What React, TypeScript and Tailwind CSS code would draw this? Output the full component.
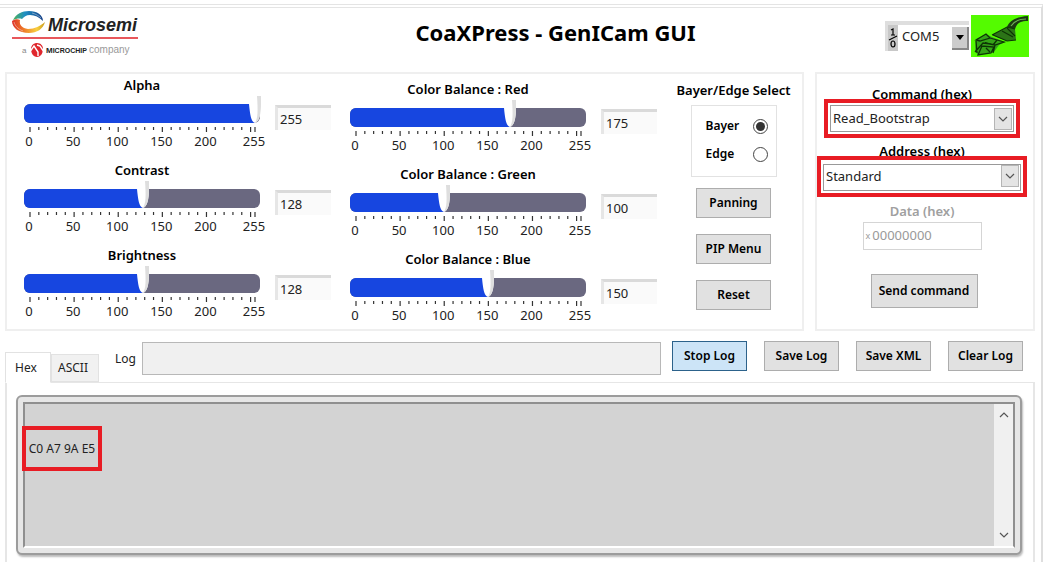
import { useState } from 'react';
import type { ReactNode } from 'react';

const TICKS = [...Array.from({ length: 26 }, (_, i) => i * 10), 255];
const TICK_LABELS = [0, 50, 100, 150, 200, 255];

const MicrosemiLogo = () => (
  <svg width="130" height="50" viewBox="0 0 130 50" role="img" aria-label="Microsemi, a Microchip company">
    <defs>
      <linearGradient id="swoosh-top">
        <stop offset="0" stopColor="#4fb35a" />
        <stop offset="0.4" stopColor="#1f8fc4" />
        <stop offset="1" stopColor="#163f86" />
      </linearGradient>
      <linearGradient id="swoosh-bottom">
        <stop offset="0" stopColor="#dd3127" />
        <stop offset="0.35" stopColor="#ee7a2a" />
        <stop offset="0.75" stopColor="#f8cf3f" />
        <stop offset="1" stopColor="#c99b1e" />
      </linearGradient>
    </defs>
    <path d="M1 9C4 3 10 0 17 0c8 0 14 4 14 10-4-4-8-6-13-6-4 0-6 2-8 4-3-1-6 0-9 1z" fill="url(#swoosh-top)" />
    <path d="M0 10c3-2 6-2 8-1-1 5 2 8 8 9 7 0 12-3 17-7-2 7-8 11-16 11C7 22 0 17 0 10z" fill="url(#swoosh-bottom)" />
    <path d="M2 11c1 4 4 7 9 9M20 2c4 1 7 3 9 5" fill="none" stroke="#fff" strokeOpacity="0.5" strokeWidth="0.8" />
    <text x="36" y="20" fontFamily="'Liberation Sans', Arial, sans-serif" fontSize="18" fontWeight="700" fontStyle="italic" fill="#222">
      Microsemi
    </text>
    <rect x="0" y="26" width="126" height="2" fill="#e8575b" />
    <text x="10" y="42" fontFamily="'Liberation Sans', Arial, sans-serif" fontSize="8" fill="#888">a</text>
    <path d="M19 38c0-4 3-6 6-6 4 0 6 3 6 6 0 5-3 8-6 8-4 0-6-4-6-8z" fill="#e0262d" />
    <path d="M17 42l5-7 4 6v4M25 34l3 1 4 6" fill="none" stroke="#fff" strokeWidth="1.4" />
    <text x="34" y="42" fontFamily="'Liberation Sans', Arial, sans-serif" fontSize="8" fontWeight="700" fill="#222">
      M<tspan fontSize="7">ICROCHIP</tspan>
    </text>
    <text x="77" y="42" fontFamily="'Liberation Sans', Arial, sans-serif" fontSize="10" fill="#999">company</text>
  </svg>
);

const ConnectorIcon = () => (
  <svg width="58" height="42" viewBox="0 0 58 42" role="img" aria-label="Connected" className="bg-[#54fb00]">
    <path d="M36 12C39 5 45 2 57 1v5c-8 0-11 2-13 8z" fill="#1b3a12" />
    <path d="M40 11c3-5 8-7 15-7" fill="none" stroke="#6fae58" strokeWidth="1.2" />
    <path d="M21 20l15-8 8 2 1 11-9 1z" fill="#2c7417" />
    <path d="M21 20l15-8 8 2M22 20l14 6 9-1M31 16l11 6M36 13l8 8" fill="none" stroke="#0d3305" strokeWidth="1.1" />
    <path d="M5 24l10-5 6 3 13 5-6 3-5 7-16 3-3-4z" fill="#35a318" />
    <path d="M5 25l10-6 4 4-10 3zM5 26l1 12M4 37l8-9 8 1M7 40l4-9 12 1-3 6zM19 23l14 4-9 3-10-2M24 30l-2 8M15 33l4 4M26 25l-4 5" fill="none" stroke="#0d3305" strokeWidth="1.3" />
  </svg>
);

const Chevron = () => (
  <svg width="10" height="6" viewBox="0 0 10 6" fill="none" stroke="#555" strokeWidth="1.2" aria-hidden="true">
    <path d="M1 1l4 4 4-4" />
  </svg>
);

const Scale = () => (
  <svg width="248" height="28" viewBox="-6 0 248 28" className="-mx-1.5" aria-hidden="true">
    {TICKS.map((t) => (
      <line
        key={t}
        x1={6 + (t / 255) * 225}
        x2={6 + (t / 255) * 225}
        y1="4"
        y2={t % 50 === 0 || t === 255 ? 9 : 7}
        stroke="#333"
        strokeWidth="1.2"
      />
    ))}
    {TICK_LABELS.map((t) => (
      <text key={t} x={5 + (t / 255) * 225} y="23" textAnchor="middle" fontSize="13" fill="#222">
        {t}
      </text>
    ))}
  </svg>
);

type SliderProps = { id: string; label: string; initial: number };

const Slider = ({ id, label, initial }: SliderProps) => {
  const [value, setValue] = useState(initial);
  const position = `${2.5 + (value / 255) * 95.4}%`;

  const update = (next: number) => {
    if (!Number.isNaN(next)) setValue(Math.min(255, Math.max(0, next)));
  };

  return (
    <div className="flex h-[85px] items-start gap-[15px]">
      <div className="w-[236px]">
        <label htmlFor={id} className="block text-center text-[13px] leading-5 font-semibold">
          {label}
        </label>
        <div className="relative mt-[9px] h-[19px] rounded-md bg-[#6a6880]">
          <div className="h-full rounded-l-md bg-[#1746e0]" style={{ width: position }} />
          {/* Thumb hangs over the top edge of the track */}
          <svg
            width="14"
            height="27"
            viewBox="0 0 14 27"
            className="absolute bottom-0 -translate-x-1/2"
            style={{ left: position }}
            aria-hidden="true"
          >
            <path d="M0 0h13v8c0 10-2 18-6 19C3 26 2 18 1 8z" fill="#fff" />
            <path d="M9 0h4v8c0 10-2 18-6 19 3-5 3-12 2-27z" fill="#dedede" />
          </svg>
          <input
            id={id}
            type="range"
            min={0}
            max={255}
            value={value}
            onChange={(e) => update(Number(e.target.value))}
            className="absolute inset-0 h-full w-full cursor-pointer opacity-0"
          />
        </div>
        <Scale />
      </div>
      <input
        type="text"
        inputMode="numeric"
        aria-label={`${label} value`}
        value={value}
        onChange={(e) => update(Number(e.target.value))}
        className="mt-[30px] h-[25px] w-14 border-t-3 border-l-3 border-t-[#dadada] border-l-[#e6e6e6] bg-[#fafafa] px-0.5 text-[13px] text-[#222] outline-none"
      />
    </div>
  );
};

const Button = ({ children, className = 'h-[30px] w-[75px]', active = false }: { children: ReactNode; className?: string; active?: boolean }) => (
  <button
    type="button"
    className={`${className} shrink-0 border text-[12px] font-semibold whitespace-nowrap ${
      active ? 'border-[#2c628b] bg-[#cce4f7]' : 'border-[#adadad] bg-[#e1e1e1]'
    }`}
  >
    {children}
  </button>
);

type HexSelectProps = { id: string; label: string; options: string[]; className: string };

const HexSelect = ({ id, label, options, className }: HexSelectProps) => (
  <div className="flex flex-col items-center">
    <label htmlFor={id} className="text-[13px] leading-5 font-semibold">
      {label}
    </label>
    {/* Red frame covers the foot of the label */}
    <div className={`${className} relative -mt-[5px] border-4 border-[#e81c24] bg-white`}>
      <select id={id} className="h-[27px] w-full appearance-none border border-[#999] px-0.5 text-[13px] text-[#222] outline-none">
        {options.map((o) => (
          <option key={o}>{o}</option>
        ))}
      </select>
      <span className="pointer-events-none absolute top-1/2 right-1 flex h-[22px] w-[18px] -translate-y-1/2 items-center justify-center border border-[#b5b5b5] bg-[#e4e4e4]">
        <Chevron />
      </span>
    </div>
  </div>
);

const Header = () => (
  <header className="flex h-16 items-start pr-[12px] pl-3">
    <div className="pt-[3px]">
      <MicrosemiLogo />
    </div>
    <h1 className="flex-1 pt-2.5 pl-[84px] text-center text-[22px] leading-7 font-bold">CoaXPress - GenICam GUI</h1>
    <div className="flex gap-0.5 pt-[7px]">
      <div className="relative mt-1.5 flex h-[30px] w-[84px] border-t-4 border-l-3 border-[#dedede]">
        <svg width="10" height="26" viewBox="0 0 10 26" className="shrink-0 bg-[#c8c8c8]" aria-hidden="true">
          <path d="M3 5l2-1v6M3 10h4M1 15l8-4" fill="none" stroke="#000" strokeWidth="1.2" />
          <ellipse cx="5" cy="19" rx="2" ry="3" fill="none" stroke="#000" strokeWidth="1.2" />
        </svg>
        <select aria-label="Serial port" className="w-full appearance-none pb-0.5 pl-1 text-[13px] text-[#222] outline-none">
          <option>COM5</option>
        </select>
        <span className="pointer-events-none absolute top-0.5 right-0 flex h-[23px] w-[17px] items-center justify-center border-r-2 border-b-2 border-[#888] bg-[#ccc]">
          <svg width="8" height="5" viewBox="0 0 8 5" aria-hidden="true">
            <path d="M0 0h8L4 5z" />
          </svg>
        </span>
      </div>
      <ConnectorIcon />
    </div>
  </header>
);

const ImageControls = () => (
  <section className="flex h-[259px] border-2 border-[#efefef] pl-[17px]">
    <div className="pt-px">
      <Slider id="alpha" label="Alpha" initial={255} />
      <Slider id="contrast" label="Contrast" initial={128} />
      <Slider id="brightness" label="Brightness" initial={128} />
    </div>
    <div className="pt-[5px] pl-[19px]">
      <Slider id="red" label="Color Balance : Red" initial={175} />
      <Slider id="green" label="Color Balance : Green" initial={100} />
      <Slider id="blue" label="Color Balance : Blue" initial={150} />
    </div>
    <div className="flex flex-1 flex-col items-center pt-1.5 pl-2">
      <h2 className="text-[13px] leading-5 font-semibold whitespace-nowrap">Bayer/Edge Select</h2>
      <fieldset className="mt-[5px] flex h-[72px] w-[86px] flex-col gap-2 border border-[#e2e2e2] pt-2.5 pr-2 pl-3.5">
        <label className="flex items-center justify-between text-[12px] leading-5 font-semibold">
          Bayer
          <input type="radio" name="mode" defaultChecked className="size-[15px] appearance-none rounded-full border border-[#444] p-0.5 checked:bg-[#333] checked:bg-clip-content" />
        </label>
        <label className="flex items-center justify-between text-[12px] leading-5 font-semibold">
          Edge
          <input type="radio" name="mode" className="size-[15px] appearance-none rounded-full border border-[#444] p-0.5 checked:bg-[#333] checked:bg-clip-content" />
        </label>
      </fieldset>
      <div className="mt-[11px] flex flex-col gap-4">
        <Button>Panning</Button>
        <Button>PIP Menu</Button>
        <Button>Reset</Button>
      </div>
    </div>
  </section>
);

const CommandPanel = () => (
  <section className="flex h-[259px] flex-col items-center border-2 border-[#efefef] pt-2.5 pr-1.5">
    <HexSelect id="command" label="Command (hex)" options={['Read_Bootstrap']} className="w-[196px] p-0.5" />
    <div className="mt-[3px]">
      <HexSelect id="address" label="Address (hex)" options={['Standard']} className="w-[210px] p-0.5 pt-[3px]" />
    </div>
    <label htmlFor="data" className="mt-1 text-[13px] leading-5 font-semibold text-[#a0a0a0]">
      Data (hex)
    </label>
    <div className="mt-px flex h-7 w-[119px] items-center gap-0.5 border border-[#d5d5d5] pl-0.5 text-[#999]">
      <span className="text-[9px]">x</span>
      <input id="data" type="text" disabled value="00000000" className="w-full text-[13px]" />
    </div>
    <div className="mt-6 pl-1">
      <Button className="h-[34px] w-[107px]">Send command</Button>
    </div>
  </section>
);

const App = () => {
  const [tab, setTab] = useState('Hex');

  return (
    <div className="min-h-screen bg-white pt-1 pr-1 font-['Noto_Sans','Open_Sans',sans-serif] text-black">
      <main className="flex min-h-[calc(100vh-4px)] flex-col border-t-4 border-r-2 border-t-[#e4e4e4] border-r-[#dedede] [border-top-style:double]">
        <Header />
        <div className="grid grid-cols-[1fr_220px] gap-[11px] pr-1.5 pl-[5px]">
          <ImageControls />
          <CommandPanel />
        </div>

        <div className="mt-2.5 flex h-[41px] items-start pr-[18px] pl-[5px]">
          <div role="tablist" className="flex items-end self-end">
            {['Hex', 'ASCII'].map((name) => (
              <button
                key={name}
                type="button"
                role="tab"
                aria-selected={tab === name}
                onClick={() => setTab(name)}
                className={`border pr-1 text-[12px] text-[#222] ${
                  tab === name
                    ? 'relative -mb-px h-[31px] w-[46px] border-[#e2e2e2] border-b-white bg-white'
                    : 'h-7 w-12 border-[#e2e2e2] bg-[#f1f1f1]'
                }`}
              >
                {name}
              </button>
            ))}
          </div>
          <label htmlFor="log" className="pt-2 pr-1.5 pl-4 text-[12px] leading-5 text-[#222]">
            Log
          </label>
          <input id="log" type="text" className="mt-px h-[33px] min-w-0 flex-1 border border-[#b8b8b8] bg-[#f0f0f0] px-2 text-[12px] outline-none" />
          <div className="flex gap-[17px] pl-[11px]">
            <Button active>Stop Log</Button>
            <Button>Save Log</Button>
            <Button>Save XML</Button>
            <Button>Clear Log</Button>
          </div>
        </div>

        <section role="tabpanel" className="mr-1.5 ml-[5px] flex-1 border-2 border-t border-b-0 border-[#e6e6e6] pt-3 pr-[11px] pb-2 pl-[9px]">
          <div className="rounded-md border-2 border-[#9c9c9c] bg-[#e6e6e6] p-[5px] shadow-[1px_2px_2px_#bbb]">
            <div className="flex min-h-[146px] justify-between border-2 border-t-[#8f8f8f] border-r-[#8f8f8f] border-b-white border-l-[#8f8f8f] bg-[#d3d3d3]">
              <div className="mt-[22px] -ml-[3px] flex h-[45px] w-20 items-center justify-center self-start border-4 border-[#e81c24] text-[12px] whitespace-nowrap text-[#222]">
                C0 A7 9A E5
              </div>
              <div className="flex w-[19px] flex-col items-center justify-between bg-[#f0f0f0] py-2">
                <button type="button" aria-label="Scroll up" className="rotate-180">
                  <Chevron />
                </button>
                <button type="button" aria-label="Scroll down">
                  <Chevron />
                </button>
              </div>
            </div>
          </div>
        </section>
      </main>
    </div>
  );
};

export default App;
